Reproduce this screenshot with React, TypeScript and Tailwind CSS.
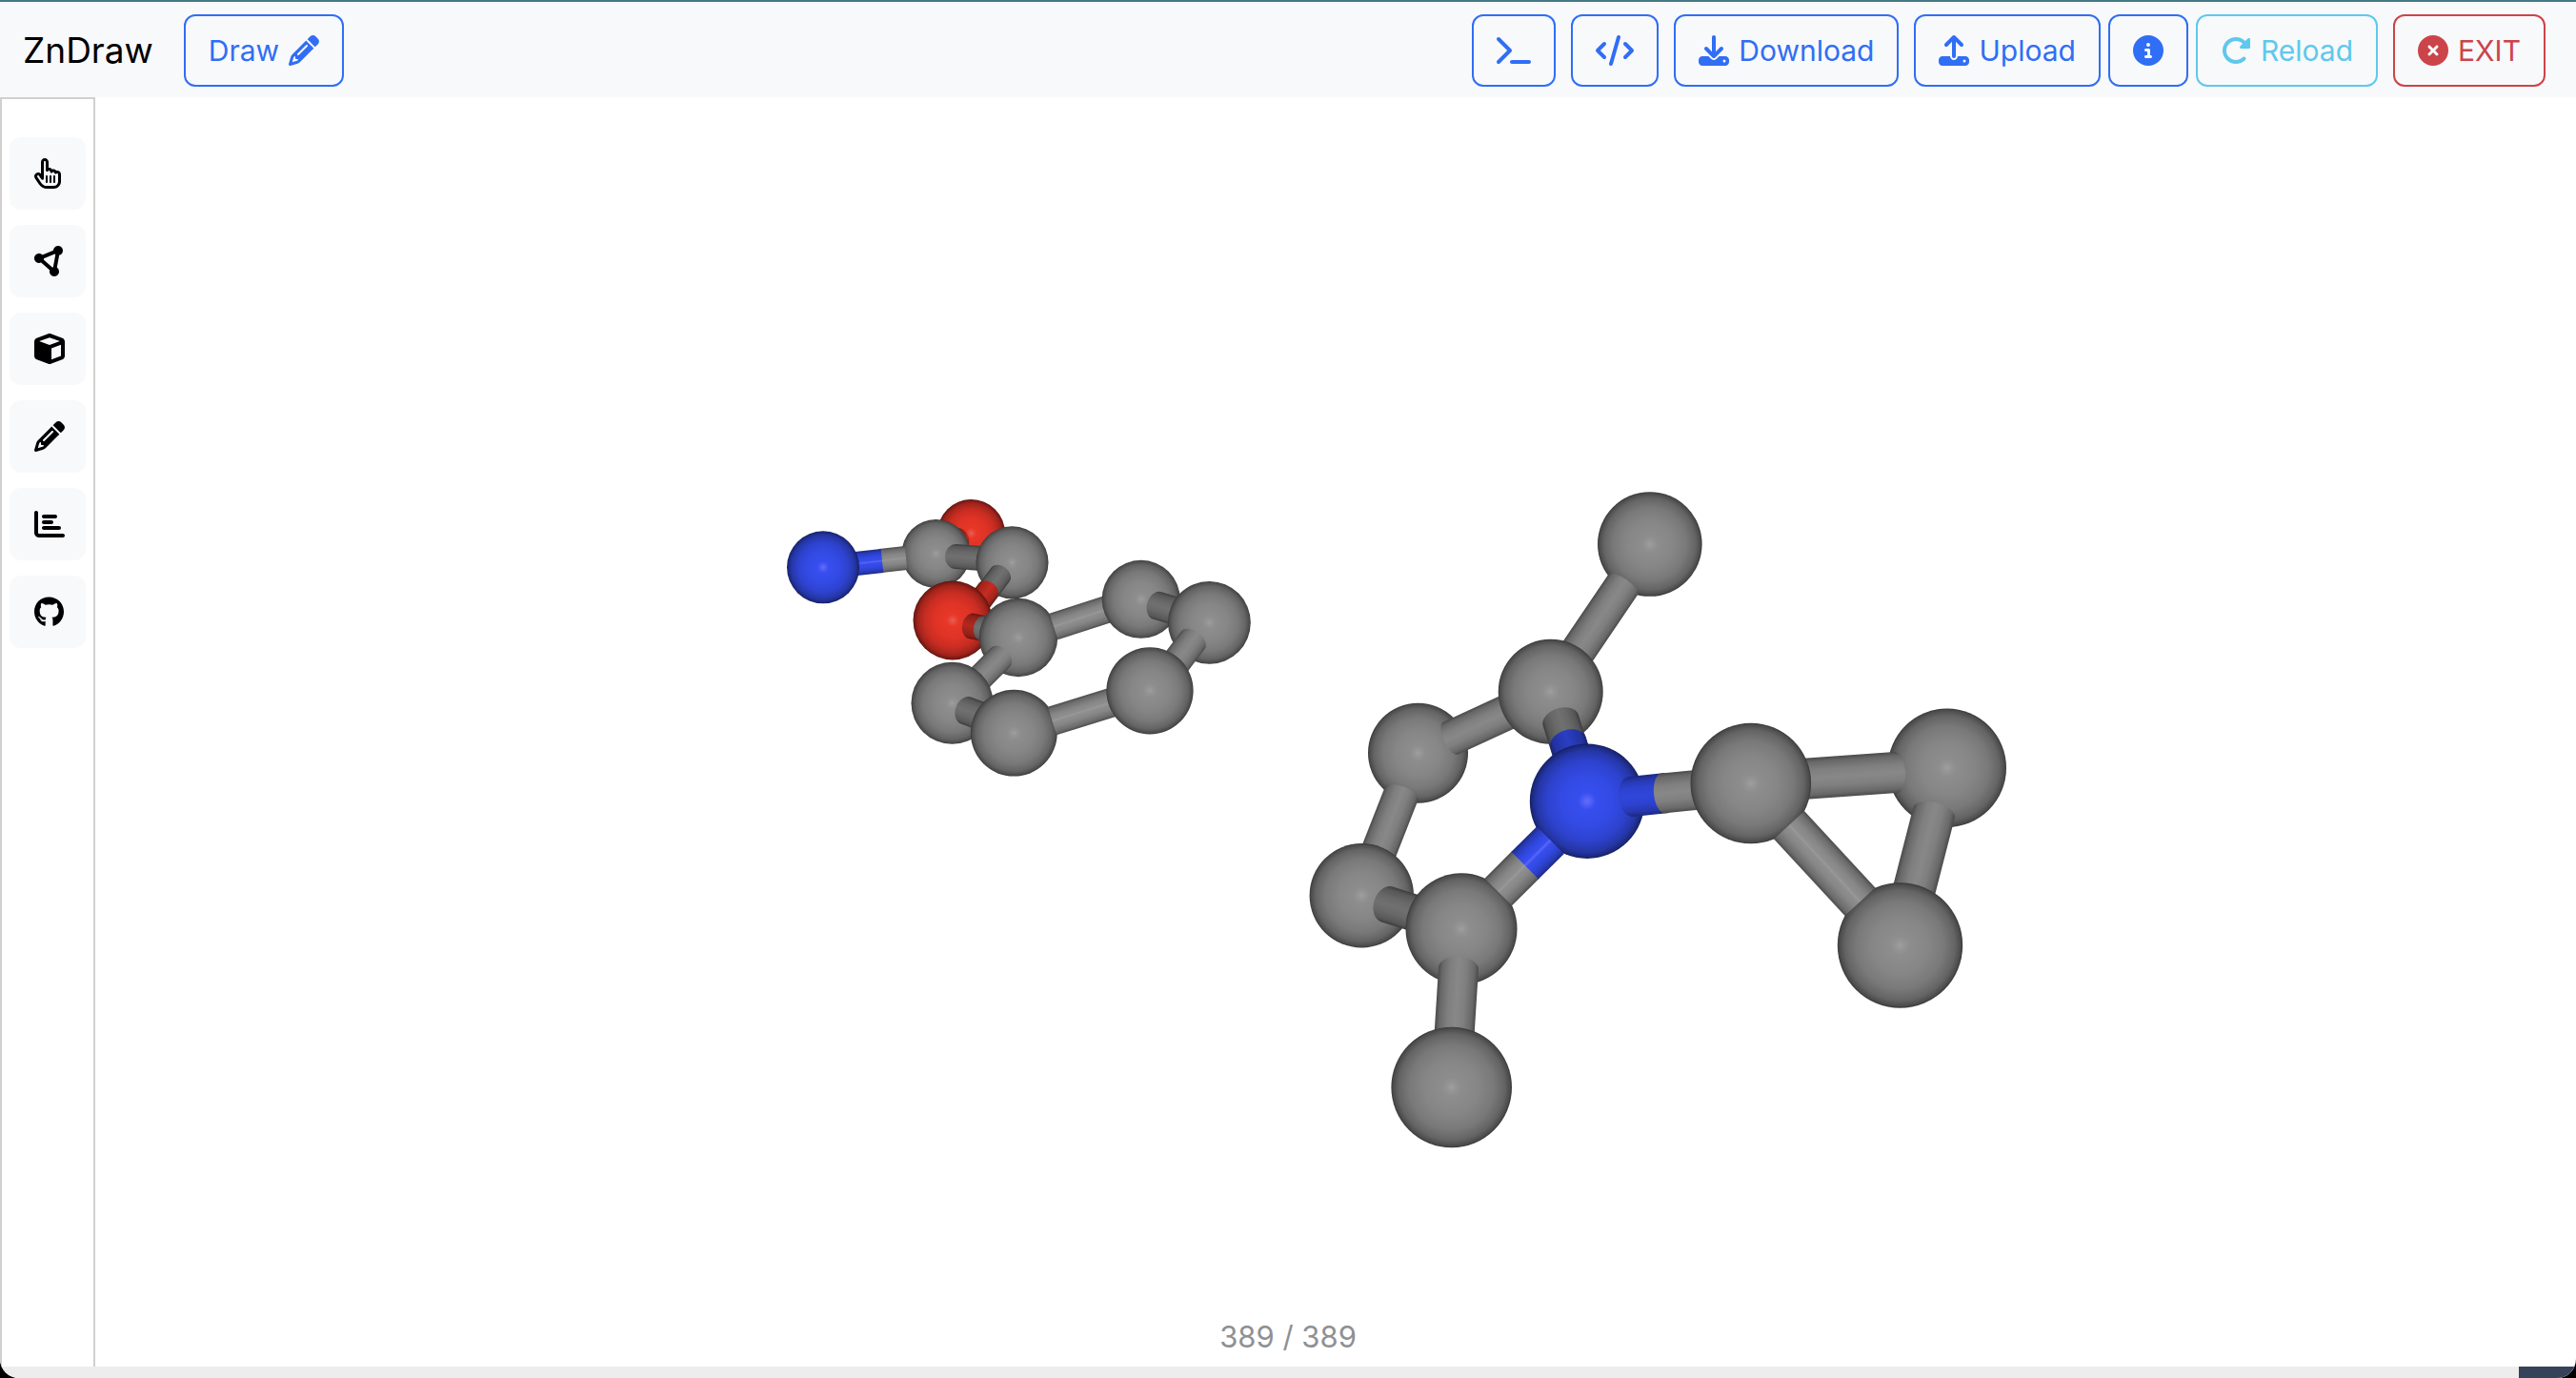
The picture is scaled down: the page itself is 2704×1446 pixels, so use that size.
import type { ReactNode } from "react";
import {
  FaChartBar,
  FaCircleInfo,
  FaCircleNodes,
  FaCircleXmark,
  FaCode,
  FaCube,
  FaDownload,
  FaGithub,
  FaPencil,
  FaRegHandPointer,
  FaRotateRight,
  FaTerminal,
  FaUpload,
} from "react-icons/fa6";

type Element = "C" | "N" | "O";
type Shade = "light" | "mid" | "dark";

const atomStops: Record<Element, [number, string][]> = {
  C: [[0, "#9f9f9f"], [0.07, "#959595"], [0.16, "#8d8d8d"], [0.45, "#868686"], [0.7, "#797979"], [0.88, "#646464"], [0.97, "#4b4b4b"], [1, "#383838"]],
  N: [[0, "#626efa"], [0.07, "#505ef5"], [0.16, "#364eee"], [0.45, "#334ae4"], [0.7, "#2d42cd"], [0.88, "#2536a6"], [0.97, "#1b287b"], [1, "#141d5c"]],
  O: [[0, "#ec5f56"], [0.07, "#e94b3f"], [0.16, "#e73728"], [0.45, "#df3326"], [0.7, "#c82d22"], [0.88, "#a2241b"], [0.97, "#761913"], [1, "#55110c"]],
};

const bondStops: Record<string, [number, string][]> = {
  "C-light": [[0, "#4c4c4c"], [0.1, "#6c6c6c"], [0.3, "#868686"], [0.46, "#8f8f8f"], [0.5, "#999999"], [0.54, "#8f8f8f"], [0.7, "#868686"], [0.9, "#6c6c6c"], [1, "#4c4c4c"]],
  "C-mid": [[0, "#4a4a4a"], [0.1, "#686868"], [0.3, "#7f7f7f"], [0.5, "#888888"], [0.7, "#7f7f7f"], [0.9, "#686868"], [1, "#4a4a4a"]],
  "C-dark": [[0, "#3c3c3c"], [0.1, "#575757"], [0.3, "#686868"], [0.5, "#707070"], [0.7, "#686868"], [0.9, "#575757"], [1, "#3c3c3c"]],
  "N-light": [[0, "#1d2b85"], [0.12, "#293cbc"], [0.3, "#3249e2"], [0.44, "#364eee"], [0.5, "#5865f6"], [0.56, "#364eee"], [0.7, "#3249e2"], [0.88, "#293cbc"], [1, "#1d2b85"]],
  "N-mid": [[0, "#1c2880"], [0.12, "#2638b0"], [0.3, "#2d42d0"], [0.5, "#3046da"], [0.7, "#2d42d0"], [0.88, "#2638b0"], [1, "#1c2880"]],
  "N-dark": [[0, "#19246f"], [0.12, "#2232a0"], [0.5, "#2a3ec4"], [0.88, "#2232a0"], [1, "#19246f"]],
  "O-dark": [[0, "#64150f"], [0.12, "#8f2018"], [0.5, "#b5281e"], [0.88, "#8f2018"], [1, "#64150f"]],
  "O-mid": [[0, "#6c1711"], [0.12, "#a0241b"], [0.5, "#c72c21"], [0.88, "#a0241b"], [1, "#6c1711"]],
};

function Atom({ el, x, y, r }: { el: Element; x: number; y: number; r: number }) {
  return <circle cx={x} cy={y} r={r} fill={`url(#atom-${el})`} />;
}

/* A cylinder from one point to another; "cap" is the depth of its rounded start. */
function Bond(p: { el?: Element; shade?: Shade; from: [number, number]; to: [number, number]; w: number; cap?: number }) {
  const { el = "C", shade = "mid", from, to, w, cap = 0 } = p;
  const dx = to[0] - from[0];
  const dy = to[1] - from[1];
  const len = Math.hypot(dx, dy);
  const angle = (Math.atan2(dy, dx) * 180) / Math.PI;
  const h = w / 2;
  const start = cap > 0 ? `A${cap} ${h} 0 0 0 0 ${h}` : `L0 ${h}`;
  return (
    <path
      transform={`translate(${from[0]} ${from[1]}) rotate(${angle})`}
      d={`M0 ${-h} ${start} L${len} ${h} L${len} ${-h} Z`}
      fill={`url(#bond-${el}-${shade})`}
    />
  );
}

function Molecules() {
  return (
    <svg
      viewBox="100 102 2604 1332"
      className="h-full w-full"
      role="img"
      aria-label="Ball and stick view of two molecules"
    >
      <defs>
        {Object.entries(atomStops).map(([el, stops]) => (
          <radialGradient key={el} id={`atom-${el}`}>
            {stops.map(([o, c]) => (
              <stop key={o} offset={o} stopColor={c} />
            ))}
          </radialGradient>
        ))}
        {Object.entries(bondStops).map(([name, stops]) => (
          <linearGradient key={name} id={`bond-${name}`} x1="0" y1="0" x2="0" y2="1">
            {stops.map(([o, c]) => (
              <stop key={o} offset={o} stopColor={c} />
            ))}
          </linearGradient>
        ))}
      </defs>

      <g>
        <Atom el="O" x={1019.5} y={559.5} r={35.5} />
        <Bond el="O" shade="dark" from={[1008, 566]} to={[990, 572]} w={24} cap={9} />
        <Atom el="C" x={982.5} y={581} r={36} />
        <Bond shade="light" from={[951, 585.5]} to={[924, 588.5]} w={25} />
        <Bond el="N" shade="light" from={[926, 588.5]} to={[885, 593]} w={25} />
        <Atom el="N" x={864} y={595.3} r={38} />
        <Bond shade="dark" from={[1003, 584]} to={[1045, 587]} w={26} cap={11} />
        <Atom el="C" x={1062.5} y={590.3} r={38} />
        <Bond shade="dark" from={[1050, 603]} to={[1026, 635]} w={24} cap={9} />
        <Bond el="O" shade="mid" from={[1037, 619.5]} to={[1018, 645]} w={24} cap={9} />
        <Atom el="O" x={1000} y={651} r={41.5} />
        <Bond el="O" shade="dark" from={[1020, 657]} to={[1060, 665]} w={27} cap={10} />
        <Bond shade="dark" from={[1032, 659.4]} to={[1060, 665]} w={27} cap={10} />
        <Atom el="C" x={1069} y={669} r={41.2} />
        <Bond from={[1050, 690]} to={[1010, 730]} w={28} cap={10} />
        <Atom el="C" x={999.5} y={737.8} r={43} />
        <Bond shade="dark" from={[1014, 745.5]} to={[1060, 763]} w={30} cap={11} />
        <Bond shade="light" from={[1106, 657.5]} to={[1185, 632]} w={29} />
        <Atom el="C" x={1197.7} y={628.8} r={41} />
        <Bond shade="dark" from={[1215, 635.5]} to={[1260, 649]} w={30} cap={11} />
        <Atom el="C" x={1269.4} y={653.3} r={43.4} />
        <Bond from={[1252, 672]} to={[1218, 717]} w={31} cap={10} />
        <Atom el="C" x={1064.3} y={769.2} r={45.4} />
        <Bond shade="light" from={[1104.5, 756.5]} to={[1190, 730]} w={31} />
        <Atom el="C" x={1207} y={724.8} r={45.6} />
      </g>

      <g>
        <Atom el="C" x={1731.8} y={571} r={54.8} />
        <Atom el="C" x={1488.5} y={790.2} r={52.5} />
        <Bond from={[1703.8, 613.3]} to={[1645, 700]} w={37.5} cap={6} />
        <Bond from={[1523, 774.5]} to={[1600, 739]} w={37.5} cap={8} />
        <Atom el="C" x={1627.7} y={725.8} r={55} />
        <Bond from={[1471, 833]} to={[1440, 912]} w={37.5} cap={8} />
        <Atom el="C" x={1429.3} y={939.7} r={54.7} />
        <Bond shade="dark" from={[1456, 949]} to={[1510, 966]} w={39} cap={14} />
        <Atom el="C" x={1534} y={974.7} r={58.5} />
        <Bond from={[1531, 1016]} to={[1525, 1110]} w={42} cap={12} />
        <Atom el="C" x={1523.7} y={1141} r={63.3} />
        <Bond shade="dark" from={[1638.3, 756]} to={[1658, 818]} w={39} cap={13} />
        <Bond el="N" shade="dark" from={[1646, 779]} to={[1658, 818]} w={39} cap={13} />
        <Atom el="N" x={1666} y={840.7} r={60.2} />
        <Bond shade="light" from={[1572.8, 936]} to={[1601.5, 907.4]} w={40.5} />
        <Bond el="N" shade="light" from={[1600.7, 908.2]} to={[1627.5, 881.7]} w={40.5} />
        <Bond el="N" from={[1712, 836]} to={[1750, 832]} w={42} cap={13} />
        <Bond from={[1746, 832.4]} to={[1800, 827]} w={42} cap={10} />
        <Atom el="C" x={2043.8} y={805.7} r={62.2} />
        <Bond from={[1990, 810.5]} to={[1870, 819]} w={43} cap={10} />
        <Atom el="C" x={1837.8} y={822} r={63.3} />
        <Bond from={[2030, 853]} to={[2003, 958]} w={45} cap={11} />
        <Atom el="C" x={1994.5} y={992} r={65.7} />
        <Bond shade="light" from={[1878, 865.8]} to={[1952.5, 946.2]} w={43.5} />
      </g>
    </svg>
  );
}

const tones = {
  primary: "border-[#306ef5] text-[#306ef5]",
  info: "border-[#5fc8ec] text-[#5fc8ec]",
  danger: "border-[#cb444a] text-[#cb444a]",
};

function BarButton({ tone = "primary", label, children }: { tone?: keyof typeof tones; label?: string; children: ReactNode }) {
  return (
    <button
      type="button"
      aria-label={label}
      className={`flex h-[76px] items-center gap-2.5 rounded-xl border-2 px-6 text-[30px] leading-[48px] whitespace-nowrap ${tones[tone]}`}
    >
      {children}
    </button>
  );
}

const tools: { label: string; icon: ReactNode }[] = [
  { label: "Selection", icon: <FaRegHandPointer className="h-8 w-7" /> },
  { label: "Interaction", icon: <FaCircleNodes className="size-8" /> },
  { label: "Scene", icon: <FaCube className="size-8" /> },
  { label: "Drawing", icon: <FaPencil className="size-8" /> },
  { label: "Analysis", icon: <FaChartBar className="size-8" /> },
  { label: "GitHub", icon: <FaGithub className="h-8 w-[31px]" /> },
];

export default function App() {
  return (
    <div className="h-screen bg-black font-[Inter,sans-serif]">
      <div className="relative flex h-full flex-col overflow-hidden rounded-b-[20px] bg-white">
        <header className="flex h-[102px] shrink-0 items-center justify-between border-t-2 border-[#437a85] bg-[#f8f9fb] pt-0.5 pr-8 pl-6">
          <div className="flex items-center gap-8">
            <a href="#" className="text-[37px] leading-[60px] text-black">
              ZnDraw
            </a>
            <BarButton>
              Draw <FaPencil className="size-8" />
            </BarButton>
          </div>
          <div className="flex items-center gap-4">
            <BarButton label="Console">
              <FaTerminal className="h-8 w-9" />
            </BarButton>
            <BarButton label="Code">
              <FaCode className="h-8 w-10" />
            </BarButton>
            <BarButton>
              <FaDownload className="size-8" /> Download
            </BarButton>
            <div className="flex gap-2">
              <BarButton>
                <FaUpload className="size-8" /> Upload
              </BarButton>
              <BarButton label="Info">
                <FaCircleInfo className="size-8" />
              </BarButton>
              <BarButton tone="info">
                <FaRotateRight className="size-8" /> Reload
              </BarButton>
            </div>
            <BarButton tone="danger">
              <FaCircleXmark className="size-8" /> EXIT
            </BarButton>
          </div>
        </header>

        <div className="flex min-h-0 flex-1">
          <nav className="flex w-[100px] shrink-0 flex-col gap-4 border-2 border-b-0 border-[#d0d0d0] px-2 pt-10" aria-label="Tools">
            {tools.map((t) => (
              <button
                key={t.label}
                type="button"
                aria-label={t.label}
                className="flex h-[76px] w-20 items-center rounded-xl bg-[#f8f9fb] pl-[26px] text-black"
              >
                {t.icon}
              </button>
            ))}
          </nav>
          <main className="min-w-0 flex-1">
            <Molecules />
          </main>
        </div>

        <p className="pointer-events-none absolute inset-x-0 bottom-[19px] text-center text-[31px] leading-[48px] text-[#8f9092]">
          389 / 389
        </p>
        <div className="flex h-3 shrink-0 justify-end bg-[#ededed]">
          <div className="w-[60px] bg-[#35425a]" />
        </div>
      </div>
    </div>
  );
}
